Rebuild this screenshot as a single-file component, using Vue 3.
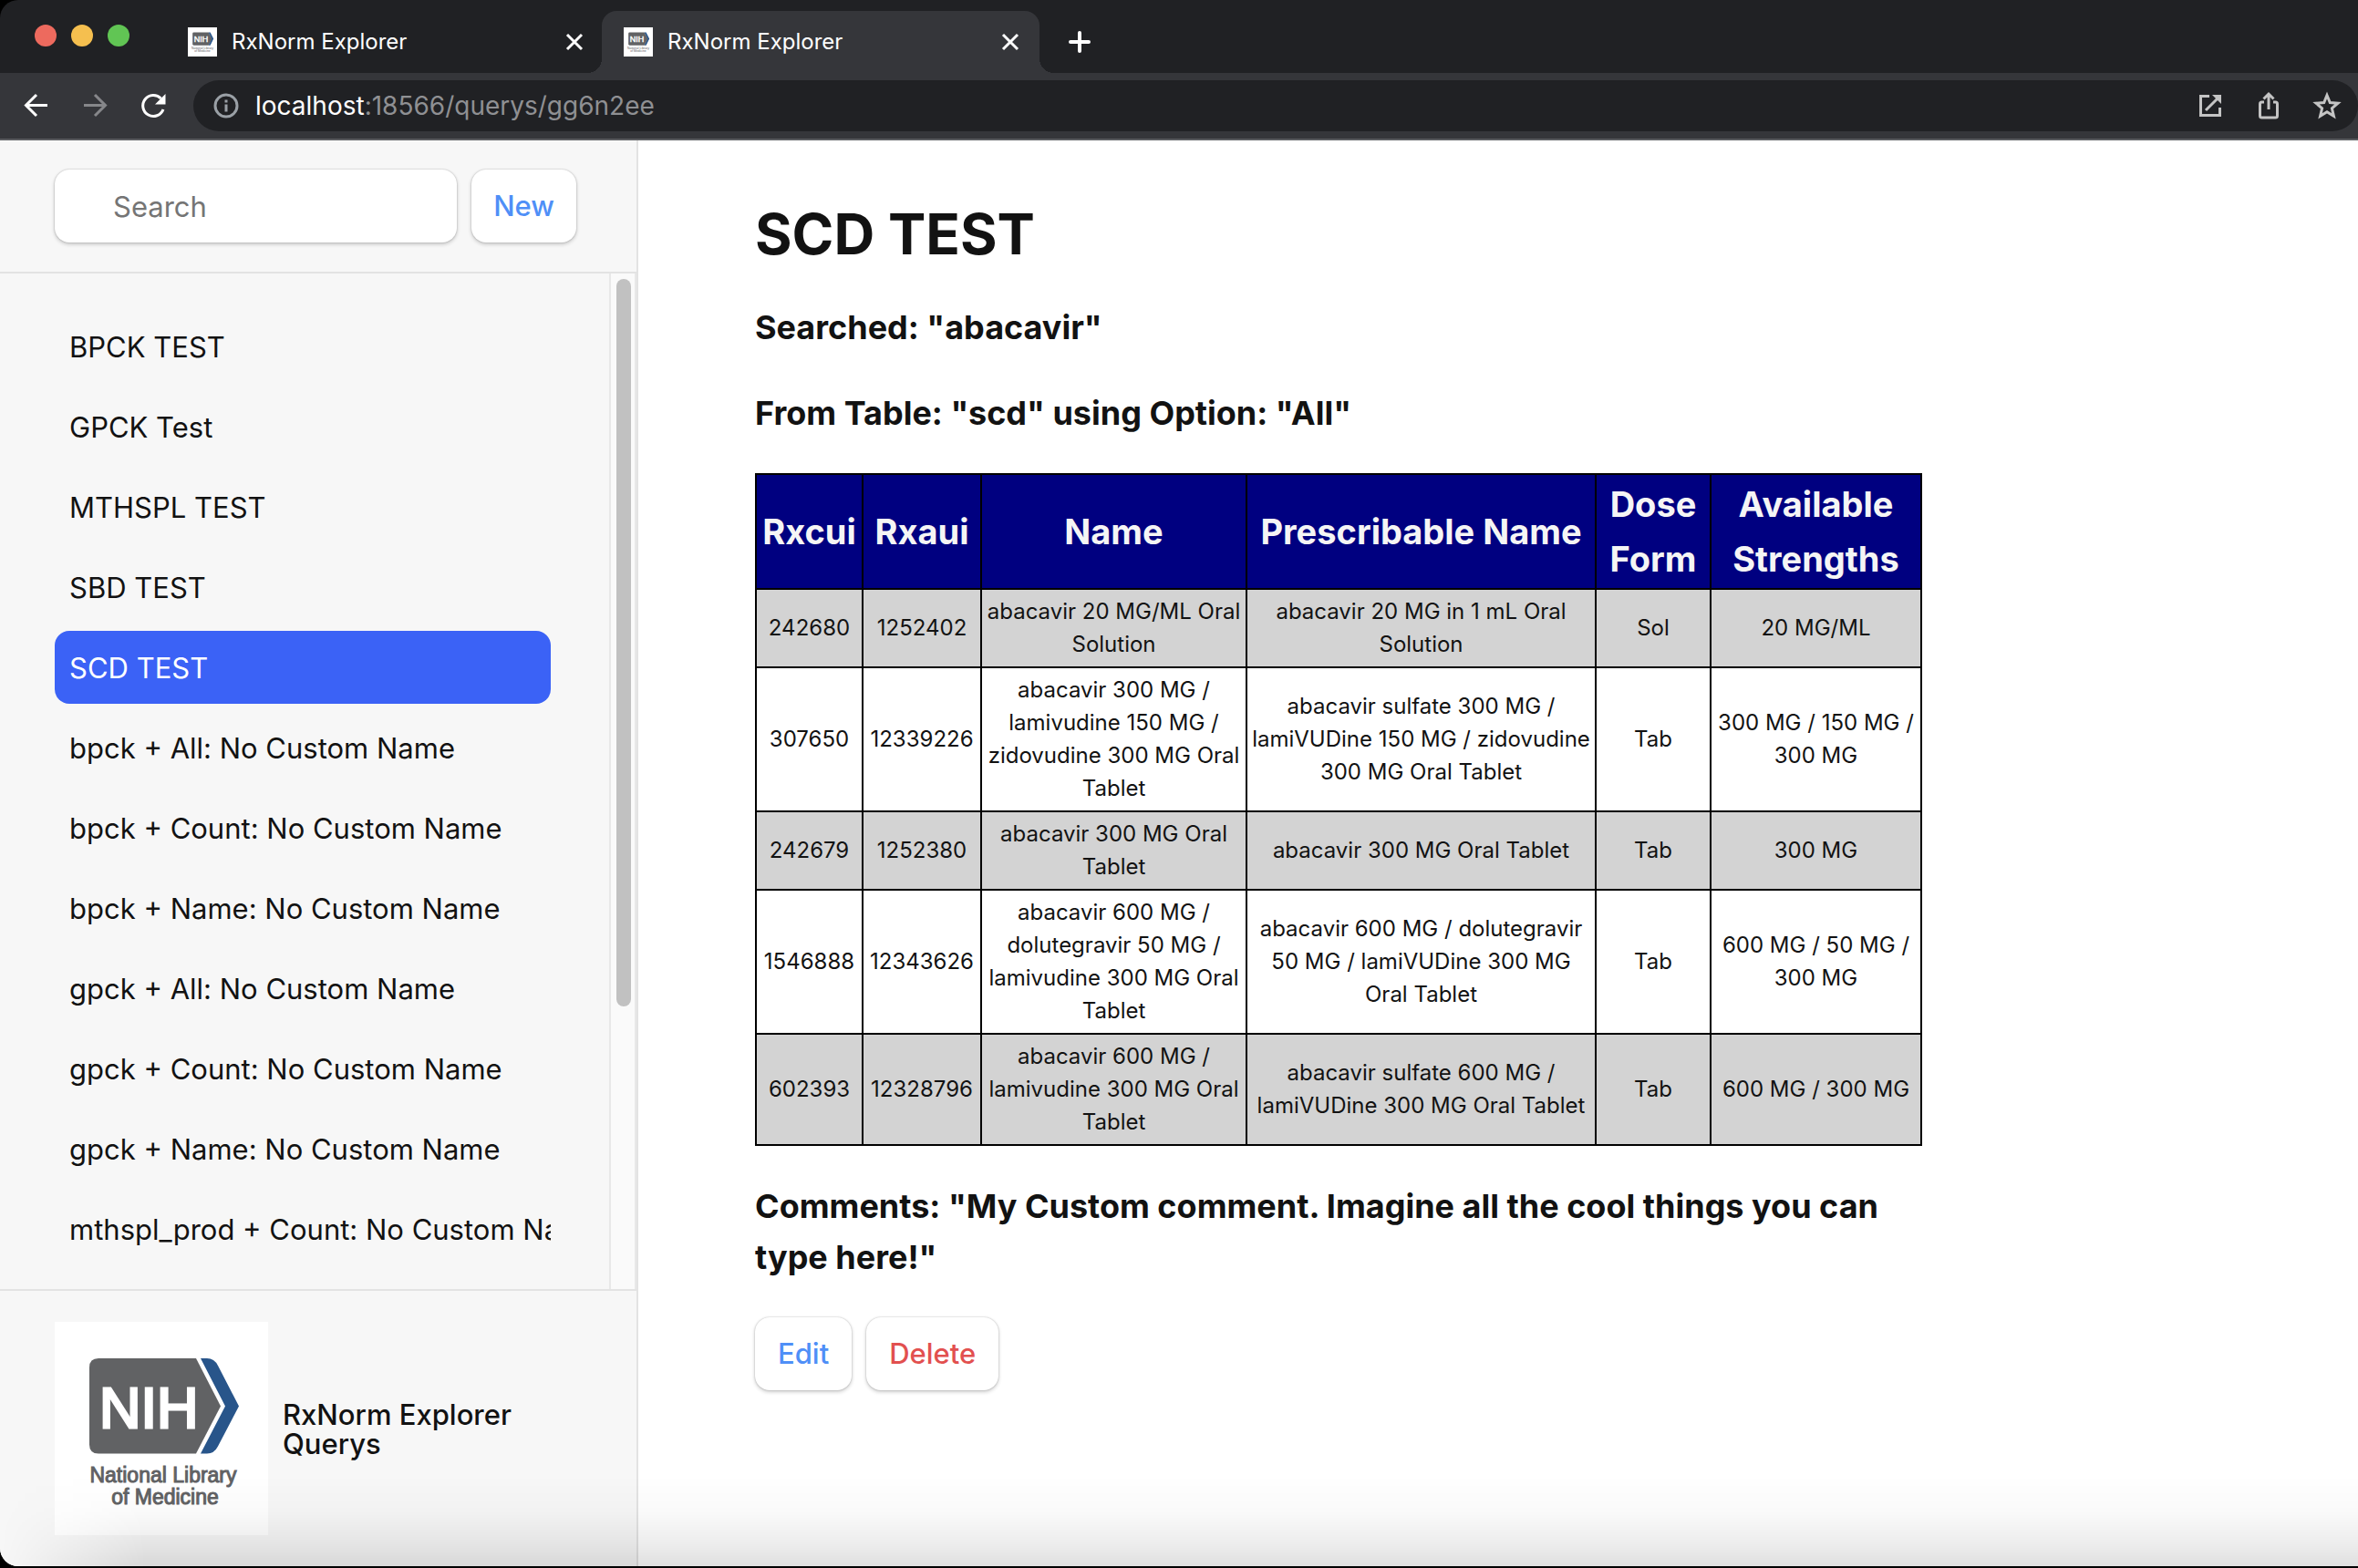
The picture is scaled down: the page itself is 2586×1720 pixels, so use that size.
<script setup>
import { ref } from 'vue'

const tabs = [
  { title: 'RxNorm Explorer', active: false },
  { title: 'RxNorm Explorer', active: true },
]

const search = ref('')
const current = ref('SCD TEST')

const queries = [
  'BPCK TEST',
  'GPCK Test',
  'MTHSPL TEST',
  'SBD TEST',
  'SCD TEST',
  'bpck + All: No Custom Name',
  'bpck + Count: No Custom Name',
  'bpck + Name: No Custom Name',
  'gpck + All: No Custom Name',
  'gpck + Count: No Custom Name',
  'gpck + Name: No Custom Name',
  'mthspl_prod + Count: No Custom Name',
]

const columns = [
  { label: 'Rxcui', key: 'rxcui' },
  { label: 'Rxaui', key: 'rxaui' },
  { label: 'Name', key: 'name' },
  { label: 'Prescribable Name', key: 'prescribable' },
  { label: 'Dose Form', key: 'form' },
  { label: 'Available Strengths', key: 'strengths' },
]

const rows = [
  { rxcui: '242680', rxaui: '1252402', name: 'abacavir 20 MG/ML Oral Solution', prescribable: 'abacavir 20 MG in 1 mL Oral Solution', form: 'Sol', strengths: '20 MG/ML' },
  { rxcui: '307650', rxaui: '12339226', name: 'abacavir 300 MG / lamivudine 150 MG / zidovudine 300 MG Oral Tablet', prescribable: 'abacavir sulfate 300 MG / lamiVUDine 150 MG / zidovudine 300 MG Oral Tablet', form: 'Tab', strengths: '300 MG / 150 MG / 300 MG' },
  { rxcui: '242679', rxaui: '1252380', name: 'abacavir 300 MG Oral Tablet', prescribable: 'abacavir 300 MG Oral Tablet', form: 'Tab', strengths: '300 MG' },
  { rxcui: '1546888', rxaui: '12343626', name: 'abacavir 600 MG / dolutegravir 50 MG / lamivudine 300 MG Oral Tablet', prescribable: 'abacavir 600 MG / dolutegravir 50 MG / lamiVUDine 300 MG Oral Tablet', form: 'Tab', strengths: '600 MG / 50 MG / 300 MG' },
  { rxcui: '602393', rxaui: '12328796', name: 'abacavir 600 MG / lamivudine 300 MG Oral Tablet', prescribable: 'abacavir sulfate 600 MG / lamiVUDine 300 MG Oral Tablet', form: 'Tab', strengths: '600 MG / 300 MG' },
]
</script>

<template>
  <div class="window">
    <header class="chrome">
      <div class="tab-strip">
        <div class="lights">
          <span class="light red"></span>
          <span class="light yellow"></span>
          <span class="light green"></span>
        </div>
        <div v-for="(tab, i) in tabs" :key="i" class="tab" :class="{ active: tab.active }">
          <svg class="favicon" viewBox="0 0 234 234" aria-hidden="true">
            <rect width="234" height="234" fill="#fff" />
            <path d="M48 40h118l28 52-28 52H48q-10 0-10-10V50q0-10 10-10z" fill="#616264" />
            <path d="M166 40h14l26 52-26 52h-14l26-52z" fill="#28558a" />
            <text x="50" y="116" font-size="66" fill="#fff" stroke="#fff" stroke-width="3">NIH</text>
            <text x="117" y="176" font-size="25" fill="#616264" text-anchor="middle">National Library</text>
            <text x="117" y="200" font-size="25" fill="#616264" text-anchor="middle">of Medicine</text>
          </svg>
          <span class="tab-title">{{ tab.title }}</span>
          <button class="tab-close" type="button" aria-label="Close tab">
            <svg viewBox="0 0 24 24"><path d="M4 4l16 16M20 4L4 20" /></svg>
          </button>
        </div>
        <button class="tab-add" type="button" aria-label="New tab">
          <svg viewBox="0 0 24 24"><path d="M12 2v20M2 12h20" /></svg>
        </button>
      </div>
      <div class="toolbar">
        <button class="tool" type="button" aria-label="Back">
          <svg viewBox="0 0 32 32"><path d="M28 15.500H5M16 4L4.500 15.500 16 27" /></svg>
        </button>
        <button class="tool dim" type="button" aria-label="Forward">
          <svg viewBox="0 0 32 32"><path d="M4 15.500h23M16 4l11.500 11.500L16 27" /></svg>
        </button>
        <button class="tool" type="button" aria-label="Reload">
          <svg viewBox="0 0 32 32">
            <path d="M24.500 8A11.500 11.500 0 1 0 27 20" />
            <path d="M29.500 3v11.500H18z" fill="#fff" stroke="none" />
          </svg>
        </button>
        <div class="address">
          <svg class="info" viewBox="0 0 28 28" aria-hidden="true">
            <circle cx="14" cy="14" r="12" />
            <path d="M14 12.500v8M14 7.500v3" />
          </svg>
          <span class="url"><b>localhost</b>:18566/querys/gg6n2ee</span>
          <button class="addr-btn" type="button" aria-label="Open in window">
            <svg viewBox="0 0 32 32"><path d="M15 5.500H5.500v21h21V18" /><path d="M25 7L11 21" /><path d="M18 4h10v10z" fill="#c4c4c4" stroke="none" /></svg>
          </button>
          <button class="addr-btn" type="button" aria-label="Share">
            <svg viewBox="0 0 32 32"><path d="M11 12H8.500q-2 0-2 2v13q0 2 2 2h15q2 0 2-2V14q0-2-2-2H21M16 20V4M10.500 8.500L16 3l5.500 5.500" /></svg>
          </button>
          <button class="addr-btn" type="button" aria-label="Bookmark">
            <svg viewBox="0 0 32 32"><path d="M16 4.500l3.300 8 8.700.7-6.600 5.600 2 8.500L16 22.800l-7.400 4.500 2-8.500L4 13.200l8.700-.7z" /></svg>
          </button>
        </div>
      </div>
    </header>

    <div class="page">
      <aside class="sidebar">
        <form class="search-bar" @submit.prevent>
          <input v-model="search" type="search" placeholder="Search" aria-label="Search queries" />
          <button class="btn" type="submit">New</button>
        </form>
        <div class="list-area">
          <nav>
            <a
              v-for="q in queries"
              :key="q"
              href="#"
              :class="{ active: q === current }"
              @click.prevent="current = q"
            >{{ q }}</a>
          </nav>
          <div class="track"><div class="thumb"></div></div>
        </div>
        <footer class="brand">
          <svg class="logo" viewBox="0 0 234 234" role="img" aria-label="NIH National Library of Medicine">
            <rect width="234" height="234" fill="#fff" />
            <path d="M48 40h107l27 52.500-27 52H48q-10 0-10-10V50q0-10 10-10z" fill="#616264" />
            <path d="M160 40h7q8 0 12 8l23 44.500-23 44q-4 8-12 8h-7l27-52z" fill="#28558a" />
            <text x="49" y="116" font-size="63" fill="#fff" stroke="#fff" stroke-width="3">NIH</text>
            <text x="119" y="176" font-size="23" fill="#616264" stroke="#616264" text-anchor="middle">National Library</text>
            <text x="121" y="200" font-size="23" fill="#616264" stroke="#616264" text-anchor="middle">of Medicine</text>
          </svg>
          <h1>RxNorm Explorer Querys</h1>
        </footer>
      </aside>

      <main class="detail">
        <h1>SCD TEST</h1>
        <h3>Searched: "abacavir"</h3>
        <h3>From Table: "scd" using Option: "All"</h3>
        <table>
          <colgroup>
            <col v-for="c in columns" :key="c.key" :class="'col-' + c.key" />
          </colgroup>
          <thead>
            <tr>
              <th v-for="c in columns" :key="c.key" scope="col">{{ c.label }}</th>
            </tr>
          </thead>
          <tbody>
            <tr v-for="r in rows" :key="r.rxcui">
              <td v-for="c in columns" :key="c.key">{{ r[c.key] }}</td>
            </tr>
          </tbody>
        </table>
        <h3>Comments: "My Custom comment. Imagine all the cool things you can type here!"</h3>
        <div class="actions">
          <button class="btn" type="button">Edit</button>
          <button class="btn danger" type="button">Delete</button>
        </div>
      </main>
      <div class="shade"></div>
    </div>
  </div>
</template>

<style>
body {
  margin: 0;
  background: #000;
}
</style>

<style scoped>
* {
  box-sizing: border-box;
}

.window {
  display: flex;
  flex-direction: column;
  height: 100vh;
  padding-bottom: 2px;
  font-family: Inter, 'Liberation Sans', sans-serif;
  font-size: 31px;
  line-height: 48px;
  color: #121212;
}

button {
  margin: 0;
  padding: 0;
  border: 0;
  background: none;
  font: inherit;
}

.chrome svg {
  display: block;
  fill: none;
  stroke: #fff;
  stroke-width: 3;
}

.tab-strip {
  display: flex;
  align-items: flex-end;
  height: 80px;
  background: #202124;
  border-top-left-radius: 20px;
}

.lights {
  display: flex;
  gap: 16px;
  width: 182px;
  padding: 0 0 29px 38px;
}

.light {
  width: 24px;
  height: 24px;
  border-radius: 50%;
}

.red { background: #ed6a5e; }
.yellow { background: #f5bf4f; }
.green { background: #61c554; }

.tab {
  position: relative;
  display: flex;
  align-items: center;
  width: 478px;
  height: 68px;
  padding: 0 18px 0 24px;
  border-radius: 16px 16px 0 0;
}

.tab.active {
  width: 480px;
  padding-right: 20px;
  background: #35363a;
}

.tab.active::before,
.tab.active::after {
  content: '';
  position: absolute;
  bottom: 0;
  width: 16px;
  height: 16px;
}

.tab.active::before {
  left: -16px;
  background: radial-gradient(circle at 0 0, transparent 16px, #35363a 16px);
}

.tab.active::after {
  right: -16px;
  background: radial-gradient(circle at 100% 0, transparent 16px, #35363a 16px);
}

.chrome .favicon {
  width: 32px;
  height: 32px;
  stroke: none;
}

.favicon text,
.logo text {
  font-family: 'Liberation Sans', Arial, sans-serif;
}

.tab-title {
  flex: 1;
  padding-left: 16px;
  font-size: 24px;
  color: #fff;
}

.tab-close {
  width: 24px;
}

.tab-add {
  width: 24px;
  margin-left: 32px;
  padding-bottom: 22px;
}

.tab-add svg {
  stroke-width: 4;
  stroke-linecap: round;
}

.toolbar {
  display: flex;
  align-items: center;
  gap: 32px;
  height: 74px;
  padding-left: 24px;
  background: #35363a;
  border-bottom: 2px solid #5b5c60;
}

.tool {
  width: 32px;
}

.dim svg {
  stroke: #86878a;
}

.address {
  flex: 1;
  display: flex;
  align-items: center;
  gap: 32px;
  height: 56px;
  margin-left: -4px;
  padding: 0 18px 0 22px;
  border-radius: 28px;
  background: #202124;
}

.chrome .info {
  width: 28px;
  stroke: #9aa0a6;
}

.url {
  flex: 1;
  margin-left: -14px;
  font-size: 28px;
  color: #8f9093;
}

.url b {
  font-weight: 400;
  color: #fff;
}

.addr-btn {
  width: 32px;
}

.chrome .addr-btn svg {
  stroke: #c4c4c4;
}

.page {
  position: relative;
  flex: 1;
  min-height: 0;
  display: flex;
  background: #fff;
  border-bottom-left-radius: 20px;
  overflow: hidden;
}

.sidebar {
  display: flex;
  flex-direction: column;
  width: 700px;
  flex: none;
  background: #f7f7f7;
  border-right: 2px solid #e3e3e3;
}

.search-bar {
  display: flex;
  gap: 16px;
  padding: 32px 66px 32px 60px;
  border-bottom: 2px solid #e3e3e3;
}

.search-bar input {
  flex: 1;
  min-width: 0;
  height: 80px;
  padding: 0 16px 0 64px;
  border: 0;
  border-radius: 16px;
  outline: 0;
  background: #fff;
  box-shadow: 0 0 2px rgba(0, 0, 0, 0.25), 0 2px 4px rgba(0, 0, 0, 0.2);
  font: inherit;
  color: inherit;
}

.search-bar input::placeholder {
  color: #757575;
}

.btn {
  height: 80px;
  padding: 0 24px;
  border-radius: 16px;
  background: #fff;
  box-shadow: 0 0 2px rgba(0, 0, 0, 0.25), 0 2px 4px rgba(0, 0, 0, 0.2);
  font-weight: 500;
  color: #4f8ff7;
}

.btn.danger {
  color: #e2504f;
}

.list-area {
  flex: 1;
  min-height: 0;
  display: flex;
}

nav {
  flex: 1;
  min-width: 0;
  display: flex;
  flex-direction: column;
  gap: 8px;
  padding: 40px 64px 0 60px;
  overflow: hidden;
}

nav a {
  flex: none;
  padding: 17px 0 15px 16px;
  border-radius: 16px;
  overflow: hidden;
  white-space: pre;
  color: inherit;
  text-decoration: none;
}

nav a.active {
  background: #3b62f6;
  color: #fff;
}

.track {
  width: 30px;
  padding: 6px 4px 0 6px;
  border: solid #e8e8e8;
  border-width: 0 2px;
  background: #fafafa;
}

.thumb {
  width: 16px;
  height: 72%;
  border-radius: 8px;
  background: #c1c1c1;
}

.brand {
  display: flex;
  align-items: center;
  gap: 16px;
  padding: 34px 100px 34px 60px;
  border-top: 2px solid #e3e3e3;
}

.logo {
  width: 234px;
  flex: none;
}

.brand h1 {
  margin: 0;
  padding-top: 2px;
  font-size: 31px;
  line-height: 32px;
  font-weight: 500;
}

.detail {
  flex: 1;
  padding: 67px 128px;
}

.detail > * {
  max-width: 1280px;
}

.detail h1 {
  margin: 0;
  font-size: 62px;
  line-height: 72px;
  font-weight: 700;
}

.detail h3 {
  margin: 38px 0;
  font-size: 36px;
  line-height: 56px;
  font-weight: 700;
}

table {
  width: 100%;
  table-layout: fixed;
  border-collapse: collapse;
  text-align: center;
}

th,
td {
  padding: 6px 2px;
  border: 2px solid #000;
}

th {
  padding: 2px;
  background: #000080;
  color: #f5f5f5;
  font-size: 38px;
  line-height: 60px;
  font-weight: 700;
}

td {
  font-size: 24px;
  line-height: 36px;
}

tbody tr:nth-child(odd) {
  background: #d3d3d3;
}

.col-rxcui { width: 117px; }
.col-rxaui { width: 130px; }
.col-name { width: 291px; }
.col-form { width: 126px; }
.col-strengths { width: 231px; }

.actions {
  display: flex;
  gap: 16px;
}

.actions .btn {
  padding: 0 25px;
}

/* Dock shadow that fades in along the lower edge of the window */
.shade {
  position: absolute;
  left: 0;
  right: 0;
  bottom: 0;
  height: 100px;
  background: linear-gradient(to bottom, transparent, rgba(0, 0, 0, 0.02) 40%, rgba(0, 0, 0, 0.07) 75%, rgba(0, 0, 0, 0.12));
  -webkit-mask-image: linear-gradient(to right, transparent, #000 160px);
  mask-image: linear-gradient(to right, transparent, #000 160px);
  pointer-events: none;
}
</style>
